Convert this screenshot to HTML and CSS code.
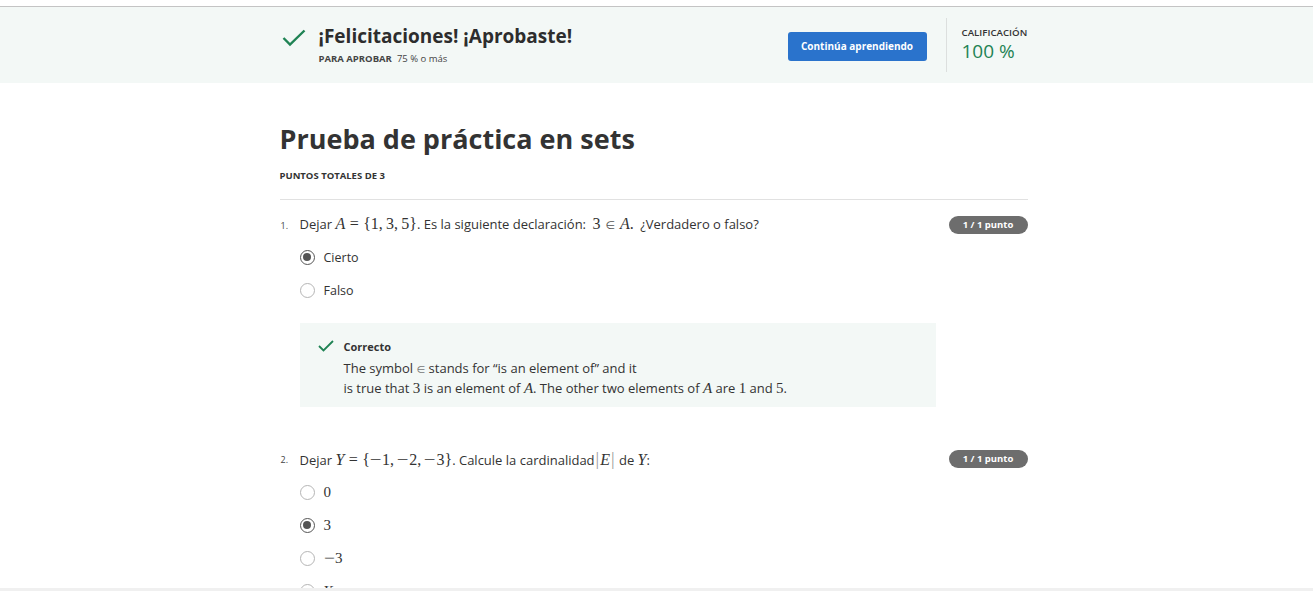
FILE: index.html
```html
<!DOCTYPE html>
<html lang="es">
<head>
<meta charset="utf-8">
<title>Prueba de práctica en sets</title>
<link rel="stylesheet" href="styles.css">
</head>
<body>
<div class="topgap"></div>
<header class="banner">
  <div class="wrap banner-inner">
    <div class="pass">
      <svg class="pass-check" width="24" height="18" viewBox="0 0 24 18"><polyline points="1.5,9 8,15.5 22.5,1.5" fill="none" stroke="#1f8354" stroke-width="2.4"/></svg>
      <div class="pass-text">
        <div class="pass-title">¡Felicitaciones! ¡Aprobaste!</div>
        <div class="pass-sub"><span class="pass-label">PARA APROBAR</span><span class="pass-val">75 % o más</span></div>
      </div>
    </div>
    <div class="actions">
      <button class="btn">Continúa aprendiendo</button>
      <div class="grade">
        <div class="grade-label">CALIFICACIÓN</div>
        <div class="grade-val">100 %</div>
      </div>
    </div>
  </div>
</header>

<main class="wrap main">
  <h1 class="title">Prueba de práctica en sets</h1>
  <div class="total">PUNTOS TOTALES DE 3</div>

  <section class="question">
    <div class="q-row">
      <span class="q-num">1.</span>
      <span class="q-text">Dejar <span class="m"><i>A</i><span class="rel">=</span>{1,<span class="th"></span>3,<span class="th"></span>5}</span>. Es la siguiente declaración: <span class="m gap">3<span class="sym elem">∈</span><i>A</i>.</span> ¿Verdadero o falso?</span>
      <span class="badge">1 / 1 punto</span>
    </div>
    <div class="options">
      <div class="opt"><span class="radio checked"></span><span class="opt-label">Cierto</span></div>
      <div class="opt"><span class="radio"></span><span class="opt-label">Falso</span></div>
    </div>
    <div class="feedback">
      <svg class="fb-check" width="16" height="12" viewBox="0 0 16 12"><polyline points="1,6 5.5,10.5 15,1" fill="none" stroke="#1f8354" stroke-width="1.8"/></svg>
      <div class="fb-body">
        <div class="fb-title">Correcto</div>
        <div class="fb-text">The symbol <span class="sym small">∈</span> stands for “is an element of” and it<br>is true that <span class="m">3</span> is an element of <span class="m"><i>A</i></span>. The other two elements of <span class="m"><i>A</i></span> are <span class="m">1</span> and <span class="m">5</span>.</div>
      </div>
    </div>
  </section>

  <section class="question q2">
    <div class="q-row">
      <span class="q-num">2.</span>
      <span class="q-text">Dejar <span class="m"><i>Y</i><span class="rel">=</span>{<span class="neg">−</span>1,<span class="th"></span><span class="neg">−</span>2,<span class="th"></span><span class="neg">−</span>3}</span>. Calcule la cardinalidad<span class="m"><span class="bar">|</span><i>E</i><span class="bar">|</span></span> de <span class="m"><i>Y</i></span>:</span>
      <span class="badge">1 / 1 punto</span>
    </div>
    <div class="options">
      <div class="opt"><span class="radio"></span><span class="opt-label m">0</span></div>
      <div class="opt"><span class="radio checked"></span><span class="opt-label m">3</span></div>
      <div class="opt"><span class="radio"></span><span class="opt-label m"><span class="neg">−</span>3</span></div>
      <div class="opt"><span class="radio"></span><span class="opt-label m"><i>Y</i></span></div>
    </div>
  </section>
</main>
<div class="bottombar"></div>
</body>
</html>
```

FILE: styles.css
```css
html, body {
  margin: 0;
  padding: 0;
  background: #ffffff;
  font-family: "Open Sans", "Noto Sans", sans-serif;
  color: #333333;
}

.topgap {
  height: 6px;
  background: #ffffff;
}

.wrap {
  width: 748px;
  margin-left: calc(50% - 377px);
}

.banner {
  border-top: 1px solid #c4c4c4;
  background: #f3f8f6;
  height: 76px;
}

.banner-inner {
  height: 76px;
  display: flex;
  align-items: center;
  justify-content: space-between;
}

.pass {
  display: flex;
  align-items: flex-start;
}

.pass-check {
  margin: 4px 0 0 2px;
}

.pass-text {
  margin-left: 13px;
  margin-top: -1px;
}

.pass-title {
  font-size: 19px;
  font-weight: 700;
  line-height: 24px;
  color: #2d2d2d;
}

.pass-sub {
  margin-top: 5px;
  font-size: 9.5px;
  line-height: 12px;
  color: #444;
}

.pass-label {
  font-weight: 700;
  margin-right: 5px;
}

.actions {
  display: flex;
  align-items: center;
}

.btn {
  width: 139px;
  height: 29px;
  border: none;
  border-radius: 3px;
  background: #2a73cc;
  color: #ffffff;
  font-family: "Open Sans", sans-serif;
  font-size: 10px;
  font-weight: 700;
  padding: 0;
  margin-top: 2px;
}

.grade {
  margin-left: 19px;
  border-left: 1px solid #dcdfde;
  height: 54px;
  padding-left: 15px;
  width: 66px;
  box-sizing: content-box;
}

.grade-label {
  margin-top: 8px;
  font-size: 9.7px;
  font-weight: 600;
  line-height: 14px;
  color: #333;
}

.grade-val {
  font-size: 19px;
  line-height: 22px;
  color: #1f8354;
}

.main {
  padding-top: 40px;
}

.title {
  margin: 0;
  font-size: 27px;
  line-height: 32px;
  font-weight: 700;
  color: #333;
}

.total {
  margin-top: 15px;
  font-size: 9.5px;
  line-height: 12px;
  font-weight: 700;
  color: #333;
  padding-bottom: 17px;
  border-bottom: 1px solid #e1e1e1;
}

.question {
  padding-top: 16px;
}

.question.q2 {
  padding-top: 43px;
}

.q2 .options {
  margin-top: 12px;
}

.q-row {
  display: flex;
  align-items: center;
  height: 18px;
}

.q-num {
  width: 20px;
  font-size: 9px;
  padding-left: 1px;
  box-sizing: border-box;
  color: #444;
}

.q-text {
  font-size: 13px;
  line-height: 18px;
  color: #333;
  white-space: nowrap;
}

.m {
  font-family: "Liberation Serif", "DejaVu Serif", serif;
  font-size: 16px;
}

.m i {
  font-style: italic;
}

.m.gap {
  margin: 0 3px;
}

.rel {
  margin: 0 0.28em;
}

.th {
  display: inline-block;
  width: 0.2em;
}

.neg {
  display: inline-block;
  transform: scaleX(1.3);
  margin: 0 2px 0 1px;
}

.sym {
  font-family: "DejaVu Sans", sans-serif;
  font-size: 11px;
  color: #555;
}

.sym.elem {
  margin: 0 5px;
}

.sym.small {
  font-size: 10px;
  color: #777;
}

.bar {
  color: #999;
  font-size: 18px;
  margin: 0 1px;
}

.badge {
  margin-left: auto;
  width: 79px;
  height: 18px;
  border-radius: 9px;
  background: #6d6d6d;
  color: #ffffff;
  font-size: 9.5px;
  font-weight: 700;
  line-height: 18px;
  text-align: center;
}

.options {
  margin-top: 11px;
  padding-left: 20px;
  display: flex;
  flex-direction: column;
  gap: 9px;
}

.opt {
  display: flex;
  align-items: center;
  height: 24px;
}

.radio {
  width: 15px;
  height: 15px;
  box-sizing: border-box;
  border-radius: 50%;
  border: 1px solid #b5b5b5;
  background: #fff;
  margin-right: 9px;
  display: flex;
  align-items: center;
  justify-content: center;
}

.radio.checked {
  border: 1.5px solid #555555;
}

.radio.checked::after {
  content: "";
  width: 8px;
  height: 8px;
  border-radius: 50%;
  background: #555555;
}

.opt-label {
  font-size: 12.5px;
  color: #333;
}

.opt-label.m {
  font-size: 15px;
}

.feedback {
  margin: 21px 0 0 20px;
  width: 636px;
  height: 84px;
  box-sizing: border-box;
  background: #f3f8f6;
  padding: 17px 0 0 18px;
  display: flex;
  align-items: flex-start;
}

.fb-body {
  margin-left: 10px;
}

.fb-title {
  font-size: 11px;
  font-weight: 700;
  line-height: 14px;
  color: #333;
}

.fb-text {
  margin-top: 5px;
  font-size: 13px;
  line-height: 19px;
  color: #333;
}

.fb-text .m {
  font-size: 15px;
}

.bottombar {
  position: fixed;
  left: 0;
  right: 0;
  bottom: 0;
  height: 3px;
  background: #f0f0f0;
}
```
